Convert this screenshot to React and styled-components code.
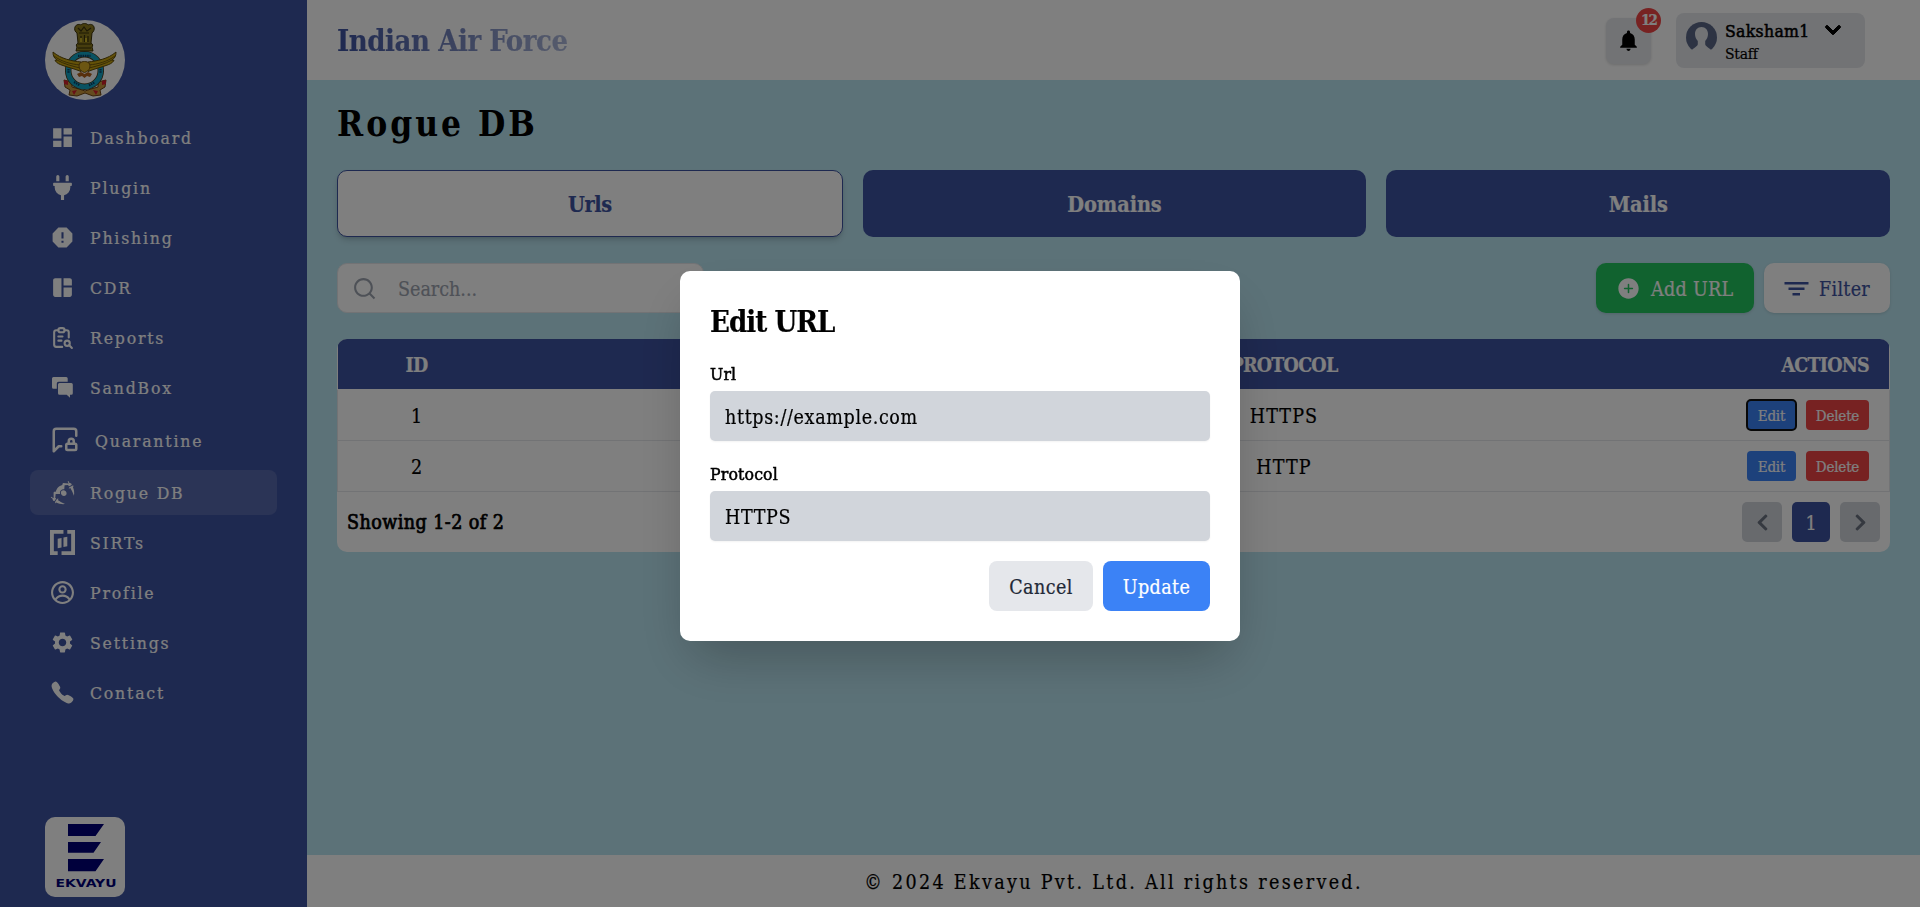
import React from 'react';
import styled, { createGlobalStyle, css } from 'styled-components';
import { FaPlug, FaChevronDown, FaChevronLeft, FaChevronRight } from 'react-icons/fa';
import { RiSpam2Fill, RiSearchLine } from 'react-icons/ri';
import { IoCall, IoAddCircle } from 'react-icons/io5';
import { MdDashboard, MdSpaceDashboard, MdSettings, MdNotifications } from 'react-icons/md';
import { TbReportSearch } from 'react-icons/tb';
import { LuMessageSquareLock } from 'react-icons/lu';
import { GiRogue } from 'react-icons/gi';
import { SiRtlzwei } from 'react-icons/si';
import { CgProfile } from 'react-icons/cg';

const navy = '#3d52a0';
const serif = `'Roboto Slab', 'DejaVu Serif Condensed', 'DejaVu Serif', serif`;

const GlobalStyle = createGlobalStyle`
  *, *::before, *::after { box-sizing: border-box; }
  body { margin: 0; font-family: ${serif}; color: #000; overflow: hidden; -webkit-text-stroke: 0.2px; }
  button, input { font-family: inherit; border: 0; margin: 0; }
  h1, h2, p { margin: 0; }
  svg { display: block; flex: none; }
`;

const Page = styled.div`
  display: flex;
  height: 100vh;
`;

/* ---------- sidebar ---------- */
const Sidebar = styled.aside`
  flex: none;
  width: 307px;
  padding: 20px 30px 10px;
  background: ${navy};
  color: #fff;
  display: flex;
  flex-direction: column;
`;
const LogoFrame = styled.div`
  width: 80px;
  height: 80px;
  margin-left: 15px;
  overflow: hidden;
  background: #fff;
  border-radius: ${(p) => (p.$round ? '50%' : '10px')};
`;
const Nav = styled.nav`
  margin-top: 15px;
  flex: 1;
  display: flex;
  flex-direction: column;
  gap: 5px;
`;
const NavItem = styled.a`
  display: flex;
  align-items: center;
  gap: 15px;
  padding: 10px 20px;
  border-radius: 8px;
  font-size: 17.5px;
  line-height: 25px;
  letter-spacing: 1.8px;
  background: ${(p) => (p.$active ? 'rgba(255,255,255,.13)' : 'transparent')};
`;
const NavLabel = styled.span`
  padding-top: 1px;
  line-height: 24px;
`;

/* ---------- main column ---------- */
const Main = styled.div`
  flex: 1;
  min-width: 0;
  display: flex;
  flex-direction: column;
`;
const Header = styled.header`
  height: 80px;
  padding: 0 55px 0 30px;
  background: #fff;
  display: flex;
  align-items: center;
  justify-content: space-between;
`;
const Brand = styled.h1`
  padding-top: 2px;
  font-size: 29px;
  line-height: 40px;
  font-weight: 700;
  letter-spacing: -0.45px;
  background: linear-gradient(to right, ${navy}, #adb8da);
  background-clip: text;
  -webkit-background-clip: text;
  color: transparent;
`;
const HeaderActions = styled.div`
  display: flex;
  align-items: center;
  gap: 25px;
`;
const BellButton = styled.button`
  position: relative;
  width: 45px;
  height: 46px;
  padding: 0;
  margin-top: 1px;
  border-radius: 8px;
  background: #e5e7eb;
  box-shadow: 0 1px 3px rgba(0, 0, 0, 0.15);
  display: grid;
  place-items: center;
`;
const Badge = styled.span`
  position: absolute;
  top: -10px;
  right: -10px;
  width: 25px;
  height: 25px;
  border-radius: 50%;
  background: #ef4444;
  color: #fff;
  font-size: 15px;
  font-weight: 700;
  letter-spacing: -2px;
  line-height: 25px;
  text-align: center;
`;
const UserCard = styled.div`
  display: flex;
  width: 189px;
  height: 55px;
  padding: 9px 10px 0;
  border-radius: 8px;
  background: #e5e7eb;
`;
const UserText = styled.div`
  width: 85px;
  margin: -3px 14px 0 8px;
  white-space: nowrap;
`;
const UserName = styled.p`
  font-size: 17.5px;
  line-height: 25px;
  letter-spacing: 0.3px;
  -webkit-text-stroke: 0.5px;
`;
const UserRole = styled.p`
  font-size: 15.5px;
  line-height: 20px;
  letter-spacing: -0.2px;
`;
const CardChevron = styled(FaChevronDown)`
  margin-top: -1px;
  stroke: currentColor;
  stroke-width: 28px;
`;
const Content = styled.main`
  flex: 1;
  padding: 19px 30px 20px;
  background: #b9e4f0;
`;
const Title = styled.h2`
  font-size: 35px;
  line-height: 50px;
  letter-spacing: 3px;
  font-weight: 700;
  -webkit-text-stroke: 0;
`;
const Tabs = styled.div`
  display: flex;
  gap: 20px;
  margin-top: 21px;
`;
const Tab = styled.button`
  flex: 1 1 0;
  height: 67px;
  padding-top: 3px;
  border-radius: 10px;
  font-size: 21.5px;
  font-weight: 700;
  letter-spacing: -0.1px;
  background: ${navy};
  color: #fff;
  ${(p) =>
    p.$active &&
    css`
      flex-basis: 2px;
      border: 1px solid ${navy};
      background: #fff;
      color: ${navy};
      letter-spacing: -0.4px;
      box-shadow: 0 4px 6px -1px rgba(0, 0, 0, 0.15), 0 2px 4px -2px rgba(0, 0, 0, 0.15);
    `}
`;
const Toolbar = styled.div`
  display: flex;
  gap: 10px;
  margin-top: 26px;
`;
const SearchBox = styled.label`
  display: flex;
  align-items: center;
  gap: 21px;
  width: 367px;
  height: 50px;
  margin-right: auto;
  padding: 0 14px;
  border: 1px solid #e5e7eb;
  border-radius: 10px;
  background: #fff;
  color: #9ca3af;
`;
const SearchInput = styled.input`
  flex: 1;
  min-width: 0;
  padding: 2px 0 0;
  background: transparent;
  outline: none;
  font-size: 19.5px;
  &::placeholder { color: #9ca3af; opacity: 1; }
`;
const ToolButton = styled.button`
  display: flex;
  align-items: center;
  gap: 10px;
  width: ${(p) => p.$width}px;
  height: 50px;
  padding: 0 20px;
  border-radius: 10px;
  font-size: 19.5px;
  white-space: nowrap;
  letter-spacing: 0.3px;
  color: ${(p) => p.$color};
  background: ${(p) => p.$bg};
  box-shadow: 0 1px 3px rgba(0, 0, 0, 0.12);
`;
const ToolLabel = styled.span`
  padding-top: 2px;
`;

/* ---------- table ---------- */
const TableCard = styled.section`
  margin-top: 26px;
  border-radius: 10px;
  overflow: hidden;
  background: #fff;
`;
const Grid = styled.div`
  display: grid;
  grid-template-columns: 157px 666px 246px 1fr;
  align-items: center;
  border: 0 solid #e5e7eb;
  border-width: 0 1px;
  text-align: center;
`;
const HeadRow = styled(Grid)`
  height: 50px;
  margin: 0 1px 1px;
  border: 0;
  background: ${navy};
  color: #fff;
  font-size: 19.5px;
  font-weight: 700;
  letter-spacing: -0.75px;
`;
const BodyRow = styled(Grid)`
  height: 51px;
  border-bottom-width: 1px;
  font-size: 19.5px;
`;
const Cell = styled.div`
  padding-top: 2px;
  letter-spacing: ${(p) => (p.$wide ? '1.1px' : 'inherit')};
`;
const ActionsHead = styled.div`
  padding: 2px 20px 0 0;
  text-align: right;
`;
const RowActions = styled.div`
  display: flex;
  justify-content: flex-end;
  gap: 10px;
  padding-right: 20px;
`;
const SmallButton = styled.button`
  width: ${(p) => p.$width}px;
  height: 30px;
  padding: 1px 0 0;
  border-radius: 4px;
  background: ${(p) => p.$bg};
  color: #fff;
  font-size: 15px;
  letter-spacing: -0.2px;
  outline: ${(p) => (p.$focused ? '2px solid #101010' : 'none')};
  outline-offset: -1px;
`;
const TableFooter = styled.div`
  height: 60px;
  padding: 0 10px;
  display: flex;
  align-items: center;
  justify-content: space-between;
`;
const Summary = styled.p`
  padding-top: 1px;
  font-size: 19.5px;
  letter-spacing: 0.45px;
  -webkit-text-stroke: 0.7px;
`;
const Pager = styled.div`
  display: flex;
  gap: 10px;
`;
const PageButton = styled.button`
  display: grid;
  place-items: center;
  width: ${(p) => (p.$current ? 38 : 40)}px;
  height: 40px;
  padding: ${(p) => (p.$current ? '2px 0 0' : 0)};
  border-radius: 5px;
  font-size: 19.5px;
  background: ${(p) => (p.$current ? navy : '#d1d5db')};
  color: ${(p) => (p.$current ? '#fff' : '#6b7280')};
`;
const Footer = styled.footer`
  height: 52px;
  padding-top: 2px;
  display: grid;
  place-items: center;
  background: #fff;
  font-size: 19.5px;
  letter-spacing: 2.33px;
`;

/* ---------- modal ---------- */
const Overlay = styled.div`
  position: fixed;
  inset: 0;
  padding-top: 5px;
  background: rgba(0, 0, 0, 0.5);
  display: flex;
  align-items: center;
  justify-content: center;
`;
const Modal = styled.form`
  width: 560px;
  height: 370px;
  padding: 31px 30px 30px;
  border-radius: 10px;
  background: #fff;
  box-shadow: 0 25px 50px -12px rgba(0, 0, 0, 0.25);
`;
const ModalTitle = styled.h2`
  font-size: 29px;
  line-height: 40px;
  font-weight: 700;
  letter-spacing: -0.95px;
`;
const Field = styled.label`
  display: block;
  margin-top: 20px;
`;
const FieldLabel = styled.span`
  display: block;
  font-size: 17.5px;
  line-height: 25px;
  letter-spacing: 0.15px;
  -webkit-text-stroke: 0.5px;
`;
const FieldInput = styled.input`
  display: block;
  width: 100%;
  height: 50px;
  margin: 4px 0 21px;
  padding: 2px 15px 0;
  border-radius: 5px;
  background: #d1d5db;
  color: #000;
  font-size: 19.5px;
  letter-spacing: 0.65px;
  box-shadow: 0 1px 2px rgba(0, 0, 0, 0.05);
`;
const ModalActions = styled.div`
  display: flex;
  justify-content: flex-end;
  gap: 10px;
  margin-top: -1px;
`;
const ModalButton = styled.button`
  width: ${(p) => p.$width}px;
  height: 50px;
  padding: 3px 0 0;
  border-radius: 8px;
  font-size: 19.5px;
  letter-spacing: 0.4px;
  background: ${(p) => (p.$primary ? '#3b82f6' : '#e5e7eb')};
  color: ${(p) => (p.$primary ? '#fff' : '#1f2937')};
`;

/* ---------- drawings ---------- */
const ChatIcon = ({ size }) => (
  <svg width={size} height={size} viewBox="0 0 25 25" fill="currentColor">
    <path d="M3.5 2h12.7A1.5 1.5 0 0 1 17.7 3.5V6.8H8.6A1.8 1.8 0 0 0 6.8 8.6v5.2H3.5A1.5 1.5 0 0 1 2 12.3V3.5A1.5 1.5 0 0 1 3.5 2z" />
    <path d="M9.5 8H21.3A1.5 1.5 0 0 1 22.800 9.500v8.800a1.500 1.500 0 0 1-1.500 1.500H20v3l-3.300-3H9.500A1.500 1.500 0 0 1 8 18.300V9.500A1.500 1.500 0 0 1 9.500 8z" />
  </svg>
);

const FilterLines = () => (
  <svg width="25" height="25" viewBox="0 0 25 25" fill="currentColor">
    <rect x="0.5" y="6" width="24" height="2.5" />
    <rect x="4.5" y="11.5" width="16" height="2.5" />
    <rect x="8.5" y="17" width="7.5" height="2.5" />
  </svg>
);

const Avatar = () => (
  <svg width="31" height="31" viewBox="0 0 31 31">
    <circle cx="15.5" cy="15.5" r="15.5" fill="#5a6787" />
    <path
      d="M15.5 5C11.500 5 9 8 9 12c0 3 1.200 5.200 2.800 7v3c0 2-3 3.500-6 6V31h19.400v-3c-3-2.500-6-4-6-6v-3C20.800 17.200 22 15 22 12c0-4-2.500-7-6.500-7z"
      fill="#e5e7eb"
    />
  </svg>
);

const Wing = () => (
  <g>
    <path
      d="M36 42C27 41 16 39 8 32c0 4 1 6 4 8l-2 .5c2 3 5 4 8 5 5 2 11 3 18 6z"
      fill="#c9a410"
      stroke="#5e4a08"
      strokeWidth="1"
    />
    <path d="M9 36c8 6 17 8 26 9M12 40c7 4 15 6 23 8" fill="none" stroke="#6f590c" strokeWidth="1" />
  </g>
);

const Emblem = () => (
  <svg width="80" height="80" viewBox="0 0 80 80">
    <path d="M19 60l8 2v5l7 2 6 2 6-2 7-2v-5l8-2-1 7-5 3 1 5-8 1-8-3-8 3-8-1 1-5-5-3z" fill="#c8963c" stroke="#6b4310" strokeWidth="1" />
    <path d="M19 60l4 1v4l-4-1zM61 60l-4 1v4l4-1zM27 71l5-1-3 5zM53 71l-5-1 3 5z" fill="#d0202a" />
    <circle cx="39.5" cy="50.5" r="16.3" fill="#fff" stroke="#4a3a1a" strokeWidth="6.5" />
    <circle cx="39.5" cy="50.5" r="16.3" fill="none" stroke="#13a5c4" strokeWidth="4.8" />
    <path d="M33 35.8l12.5 0M29 62l6 3.5M44 65.5l6-3.5M23.5 49v4M55.5 49v4" stroke="#0a3d66" strokeWidth="2.2" strokeDasharray="1.5 .8" />
    <path
      d="M30 7c1-3 5-3 6-2 1-2 6-2 7 0 2-1 5-1 6 2 1 3-1 5-2 6l-1 10c2 1 2 3 1 4l1 4H31l1-4c-1-1-1-3 1-4l-1-10c-2-1-3-4-2-6z"
      fill="#8c7a1d"
      stroke="#3b320a"
      strokeWidth="1"
    />
    <path d="M33 8l3 3 3-4 3 4 4-3M34 13h10M36 16v6M39.5 15v7M43 16v6M33 24h13M33 28h13" fill="none" stroke="#3b320a" strokeWidth="1.2" />
    <path d="M36 18v4M41 18v4" stroke="#e2cb2c" strokeWidth="1.5" />
    <Wing />
    <g transform="translate(79 0) scale(-1 1)">
      <Wing />
    </g>
    <path d="M35 43c2-2 7-2 9 0 2 3 1 8-4.500 9.500C34 51 33 46 35 43z" fill="#d8ac24" stroke="#6f5010" strokeWidth="1" />
    <path d="M32 54l4-2 3.500 2 3.500-2 4 2-2 3-3-1-2.500 2-2.500-2-3 1z" fill="#b0601a" />
  </svg>
);

const EkvayuLogo = () => (
  <svg width="80" height="80" viewBox="0 0 80 80" fill="#000078">
    <path d="M23 7h36l-8.500 12H23zM23 25h33l-7.500 10.700H23zM23 42h36l-8.500 12.300H23z" />
    <text x="10.500" y="69.500" fontFamily="'DejaVu Sans', sans-serif" fontWeight="700" fontSize="11" textLength="61" lengthAdjust="spacingAndGlyphs">
      EKVAYU
    </text>
  </svg>
);

const navItems = [
  ['Dashboard', MdDashboard],
  ['Plugin', FaPlug],
  ['Phishing', RiSpam2Fill],
  ['CDR', MdSpaceDashboard],
  ['Reports', TbReportSearch],
  ['SandBox', ChatIcon],
  ['Quarantine', LuMessageSquareLock, 30],
  ['Rogue DB', GiRogue],
  ['SIRTs', SiRtlzwei],
  ['Profile', CgProfile],
  ['Settings', MdSettings],
  ['Contact', IoCall],
];

const rows = [
  { id: 1, protocol: 'HTTPS', editing: true },
  { id: 2, protocol: 'HTTP' },
];

export default function App() {
  return (
    <>
      <GlobalStyle />
      <Page>
        <Sidebar>
          <LogoFrame $round>
            <Emblem />
          </LogoFrame>
          <Nav>
            {navItems.map(([label, Icon, size = 25]) => (
              <NavItem key={label} $active={label === 'Rogue DB'}>
                <Icon size={size} />
                <NavLabel>{label}</NavLabel>
              </NavItem>
            ))}
          </Nav>
          <LogoFrame>
            <EkvayuLogo />
          </LogoFrame>
        </Sidebar>
        <Main>
          <Header>
            <Brand>Indian Air Force</Brand>
            <HeaderActions>
              <BellButton>
                <MdNotifications size={25} />
                <Badge>12</Badge>
              </BellButton>
              <UserCard>
                <Avatar />
                <UserText>
                  <UserName>Saksham1</UserName>
                  <UserRole>Staff</UserRole>
                </UserText>
                <CardChevron size={18} />
              </UserCard>
            </HeaderActions>
          </Header>
          <Content>
            <Title>Rogue DB</Title>
            <Tabs>
              <Tab $active>Urls</Tab>
              <Tab>Domains</Tab>
              <Tab>Mails</Tab>
            </Tabs>
            <Toolbar>
              <SearchBox>
                <RiSearchLine size={25} />
                <SearchInput placeholder="Search..." />
              </SearchBox>
              <ToolButton $width={158} $bg="#22c55e" $color="#fff">
                <IoAddCircle size={25} />
                <ToolLabel>Add URL</ToolLabel>
              </ToolButton>
              <ToolButton $width={126} $bg="#fff" $color={navy}>
                <FilterLines />
                <ToolLabel>Filter</ToolLabel>
              </ToolButton>
            </Toolbar>
            <TableCard>
              <HeadRow>
                <Cell>ID</Cell>
                <Cell />
                <Cell>PROTOCOL</Cell>
                <ActionsHead>ACTIONS</ActionsHead>
              </HeadRow>
              {rows.map((row) => (
                <BodyRow key={row.id}>
                  <Cell>{row.id}</Cell>
                  <Cell />
                  <Cell $wide>{row.protocol}</Cell>
                  <RowActions>
                    <SmallButton $width={49} $bg="#3b82f6" $focused={row.editing}>Edit</SmallButton>
                    <SmallButton $width={63} $bg="#ef4444">Delete</SmallButton>
                  </RowActions>
                </BodyRow>
              ))}
              <TableFooter>
                <Summary>Showing 1-2 of 2</Summary>
                <Pager>
                  <PageButton><FaChevronLeft size={19} /></PageButton>
                  <PageButton $current>1</PageButton>
                  <PageButton><FaChevronRight size={19} /></PageButton>
                </Pager>
              </TableFooter>
            </TableCard>
          </Content>
          <Footer>© 2024 Ekvayu Pvt. Ltd. All rights reserved.</Footer>
        </Main>
      </Page>
      <Overlay>
        <Modal>
          <ModalTitle>Edit URL</ModalTitle>
          <Field>
            <FieldLabel>Url</FieldLabel>
            <FieldInput defaultValue="https://example.com" />
          </Field>
          <Field>
            <FieldLabel>Protocol</FieldLabel>
            <FieldInput defaultValue="HTTPS" />
          </Field>
          <ModalActions>
            <ModalButton type="button" $width={104}>Cancel</ModalButton>
            <ModalButton type="button" $primary $width={107}>Update</ModalButton>
          </ModalActions>
        </Modal>
      </Overlay>
    </>
  );
}
